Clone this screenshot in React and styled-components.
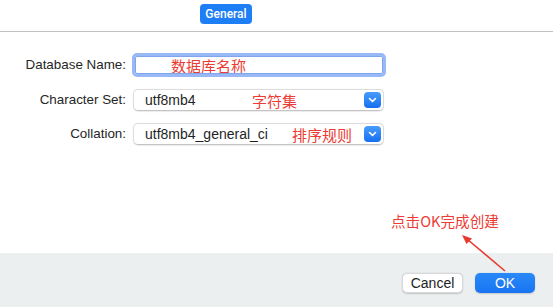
import React from "react";
import styled, { createGlobalStyle } from "styled-components";

const Global = createGlobalStyle`
  html, body { margin: 0; padding: 0; background: #fff; }
  body { font-family: "Liberation Sans", Arial, sans-serif; -webkit-font-smoothing: antialiased; }
  #root { width: 553px; height: 307px; overflow: hidden; }
`;

const Window = styled.div`
  width: 553px;
  height: 307px;
  display: flex;
  flex-direction: column;
  background: #ffffff;
  position: relative;
`;

const TabBar = styled.div`
  height: 32px;
  border-bottom: 1px solid #c2c2c2;
  display: flex;
  justify-content: flex-start;
  padding-left: 200px;
  padding-top: 4px;
  box-sizing: border-box;
`;

const Tab = styled.div`
  width: 52px;
  height: 20px;
  border-radius: 4px;
  background: #1d7ef5;
  color: #fff;
  font-family: Roboto, "Liberation Sans", sans-serif;
  font-size: 12px;
  font-weight: 500;
  display: flex;
  align-items: center;
  justify-content: center;
`;

const Body = styled.div`
  flex: 1;
  padding-top: 21px;
  box-sizing: border-box;
`;

const Form = styled.div`
  display: grid;
  grid-template-columns: 126px 253px;
  column-gap: 7px;
  row-gap: 12px;
  align-items: center;
`;

const Label = styled.div`
  text-align: right;
  font-size: 13.4px;
  color: #262626;
  height: ${(p) => p.$h}px;
  line-height: ${(p) => p.$h}px;
`;

const TextField = styled.div`
  position: relative;
  height: 24px;
  box-sizing: border-box;
  border: 3px solid #98b9f5;
  border-radius: 5px;
  background: #fff;
  margin-left: -1px;
  &::after {
    content: "";
    position: absolute;
    inset: 0;
    border: 1px solid #7ea5ee;
    border-radius: 2px;
  }
`;

const Select = styled.div`
  position: relative;
  height: 22px;
  width: 251px;
  box-sizing: border-box;
  border: 1px solid #dcdcdc;
  border-bottom-color: #c4c4c4;
  border-radius: 5px;
  background: #fff;
  box-shadow: 0 0.5px 1px rgba(0, 0, 0, 0.08);
  display: flex;
  align-items: center;
  padding-left: 11px;
  font-size: 14px;
  color: #1f1f1f;
`;

const Chevron = styled.div`
  position: absolute;
  right: 2px;
  top: 2px;
  width: 17px;
  height: 16px;
  border-radius: 4px;
  background: linear-gradient(#4a9cfb, #1670f0);
  display: flex;
  align-items: center;
  justify-content: center;
`;

const Note = styled.span`
  position: absolute;
  left: ${(p) => p.$x}px;
  top: ${(p) => p.$y}px;
  font-family: "Noto Sans CJK SC", "Liberation Sans", sans-serif;
  font-size: ${(p) => p.$size || 15}px;
  line-height: 1;
  color: #ec3b34;
  white-space: nowrap;
`;

const Footer = styled.div`
  height: 54px;
  background: #ebeff0;
  display: flex;
  justify-content: flex-end;
  align-items: flex-start;
  gap: 12px;
  padding: 20px 18px 0 0;
  box-sizing: border-box;
`;

const Button = styled.button`
  height: 20px;
  width: ${(p) => p.$w}px;
  border-radius: 5px;
  font-family: "Liberation Sans", Arial, sans-serif;
  font-size: 14px;
  padding: 0;
  cursor: default;
  border: ${(p) => (p.$primary ? "none" : "1px solid #d9d9d9")};
  background: ${(p) => (p.$primary ? "linear-gradient(#2a89f8, #1874f1)" : "#fff")};
  color: ${(p) => (p.$primary ? "#fff" : "#222")};
  box-shadow: 0 0.5px 1.5px rgba(0, 0, 0, 0.18);
`;

const Arrow = styled.svg`
  position: absolute;
  left: 0;
  top: 0;
  pointer-events: none;
`;

const ChevronIcon = () => (
  <svg width="9" height="6" viewBox="0 0 9 6">
    <path d="M1.5 1.5 L4.5 4.3 L7.5 1.5" fill="none" stroke="#fff" strokeWidth="1.6" strokeLinecap="round" strokeLinejoin="round" />
  </svg>
);

export default function App() {
  return (
    <>
      <Global />
      <Window>
        <TabBar>
          <Tab>General</Tab>
        </TabBar>
        <Body>
          <Form>
            <Label $h={24}>Database Name:</Label>
            <TextField>
              <Note $x={36} $y={2}>数据库名称</Note>
            </TextField>
            <Label $h={22}>Character Set:</Label>
            <Select>
              utf8mb4
              <Note $x={118} $y={3}>字符集</Note>
              <Chevron>
                <ChevronIcon />
              </Chevron>
            </Select>
            <Label $h={22}>Collation:</Label>
            <Select>
              utf8mb4_general_ci
              <Note $x={158} $y={3}>排序规则</Note>
              <Chevron>
                <ChevronIcon />
              </Chevron>
            </Select>
          </Form>
        </Body>
        <Note $x={391} $y={214} $size={14.6}>点击OK完成创建</Note>
        <Footer>
          <Button $w={61}>Cancel</Button>
          <Button $w={60} $primary>OK</Button>
        </Footer>
        <Arrow width="553" height="307" viewBox="0 0 553 307">
          <line x1="505" y1="271" x2="467" y2="239" stroke="#e8392f" strokeWidth="1.6" />
          <path d="M462 235 L472 238.5 L466.5 244 Z" fill="#e8392f" />
        </Arrow>
      </Window>
    </>
  );
}
